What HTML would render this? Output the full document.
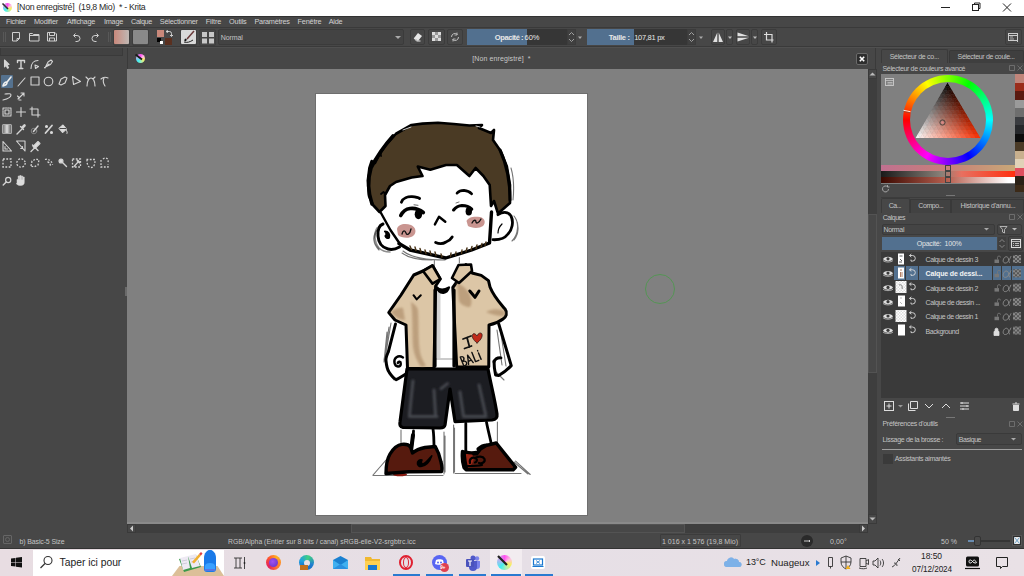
<!DOCTYPE html>
<html><head><meta charset="utf-8">
<style>
*{margin:0;padding:0;box-sizing:border-box}
html,body{width:1024px;height:576px;overflow:hidden;background:#474747;font-family:"Liberation Sans",sans-serif;position:relative}
.a{position:absolute}
.t{position:absolute;white-space:nowrap;color:#c4c4c4;font-size:7px;line-height:9px;letter-spacing:-0.35px}
svg{position:absolute;overflow:visible}
</style></head><body>
<!-- ===== title bar ===== -->
<div class="a" style="left:0;top:0;width:1024px;height:16px;background:#fff"></div>
<div class="a" style="left:3px;top:3px;width:9px;height:9px;border-radius:50%;background:conic-gradient(#ff50f0 0deg,#ffc0e0 60deg,#f8f060 110deg,#b0f0b0 160deg,#40f0f0 220deg,#c0b0f0 300deg,#ff50f0 360deg)"></div>
<svg style="left:0;top:0" width="16" height="16"><path d="M2.5 3.5 L8 9" stroke="#333" stroke-width="1.6"/></svg>
<div class="t" style="left:17px;top:1px;font-size:8.8px;color:#2a2a2a;line-height:12px;letter-spacing:-0.331px">[Non enregistré]&nbsp; (19,8 Mio)&nbsp; * - Krita</div>
<svg style="left:938px;top:0" width="84" height="15">
 <path d="M3 7.5h9" stroke="#222" stroke-width="1"/>
 <rect x="34.5" y="4.5" width="6" height="6" fill="none" stroke="#222"/><path d="M36.5 4.5v-1.5h5.5v5.5h-1.5" fill="none" stroke="#222"/>
 <path d="M65 3.5l8 8M73 3.5l-8 8" stroke="#222" stroke-width="1"/>
</svg>
<!-- ===== menu bar ===== -->
<div class="a" style="left:0;top:16px;width:1024px;height:11px;background:#474747;border-top:1px solid #323232"></div>
<div class="t" style="left:6px;top:17px;font-size:7.3px;line-height:10px;color:#d2d2d2;letter-spacing:-0.272px">Fichier</div>
<div class="t" style="left:34px;top:17px;font-size:7.3px;line-height:10px;color:#d2d2d2;letter-spacing:-0.244px">Modifier</div>
<div class="t" style="left:67px;top:17px;font-size:7.3px;line-height:10px;color:#d2d2d2;letter-spacing:-0.255px">Affichage</div>
<div class="t" style="left:104px;top:17px;font-size:7.3px;line-height:10px;color:#d2d2d2;letter-spacing:-0.256px">Image</div>
<div class="t" style="left:131px;top:17px;font-size:7.3px;line-height:10px;color:#d2d2d2;letter-spacing:-0.354px">Calque</div>
<div class="t" style="left:159.8px;top:17px;font-size:7.3px;line-height:10px;color:#d2d2d2;letter-spacing:-0.215px">Sélectionner</div>
<div class="t" style="left:205.7px;top:17px;font-size:7.3px;line-height:10px;color:#d2d2d2;letter-spacing:-0.103px">Filtre</div>
<div class="t" style="left:229px;top:17px;font-size:7.3px;line-height:10px;color:#d2d2d2;letter-spacing:-0.176px">Outils</div>
<div class="t" style="left:254.5px;top:17px;font-size:7.3px;line-height:10px;color:#d2d2d2;letter-spacing:-0.262px">Paramètres</div>
<div class="t" style="left:297.5px;top:17px;font-size:7.3px;line-height:10px;color:#d2d2d2;letter-spacing:-0.165px">Fenêtre</div>
<div class="t" style="left:328.7px;top:17px;font-size:7.3px;line-height:10px;color:#d2d2d2;letter-spacing:-0.227px">Aide</div>

<!-- ===== toolbar ===== -->
<div class="a" style="left:0;top:27px;width:1024px;height:1px;background:#3a3a3a"></div>
<div class="a" style="left:0;top:28px;width:1024px;height:18px;background:#474747"></div>
<div class="a" style="left:0;top:46px;width:1024px;height:1px;background:#3a3a3a"></div>
<div class="a" style="left:0;top:47px;width:1024px;height:1px;background:#505050"></div>
<svg style="left:0;top:27px" width="1024" height="20">
 <g fill="none" stroke="#cfcfcf" stroke-width="1">
  <!-- grip -->
  <path d="M3.5 5.5v10M5.5 5.5v10" stroke="#6a6a6a" stroke-dasharray="1 1"/>
  <!-- new doc -->
  <path d="M12.5 5.5h7v6l-2.5 2.5h-4.5z"/><path d="M17 14v-2.5h2.5"/>
  <!-- open -->
  <path d="M29.5 6.5h3l1 1h5.5v6.5h-9.5z"/><path d="M29.5 8.5h9.5"/>
  <!-- save -->
  <path d="M47.5 5.5h7.5l1.5 1.5v7h-9z"/><path d="M49.5 5.5v3h5v-3M49.5 14v-3h5v3"/>
  <!-- undo -->
  <path d="M74 8.5h3a3 3 0 0 1 0 6h-1.5" /><path d="M75.5 6.5l-2 2 2 2"/>
  <!-- redo -->
  <path d="M98 8.5h-3a3 3 0 0 0 0 6h1.5" /><path d="M96.5 6.5l2 2-2 2"/>
  <path d="M108.5 5.5v10M110.5 5.5v10" stroke="#6a6a6a" stroke-dasharray="1 1"/>
 </g>
</svg>
<!-- gradient swatch -->
<div class="a" style="left:113px;top:29px;width:17px;height:17px;border:1px solid #3e3e3e;border-radius:2px"></div>
<div class="a" style="left:114px;top:30px;width:15px;height:14px;background:linear-gradient(90deg,#c9887b,#c0b8b4);border-radius:1px"></div>
<div class="a" style="left:132px;top:29px;width:17px;height:17px;border:1px solid #3e3e3e;border-radius:2px"></div>
<div class="a" style="left:133px;top:30px;width:15px;height:14px;background:#898989;border-radius:1px"></div>
<!-- fg/bg -->
<div class="a" style="left:157px;top:30px;width:7px;height:7px;background:#c9887a"></div>
<div class="a" style="left:165px;top:38px;width:7px;height:7px;background:#5a3020"></div>
<div class="a" style="left:157px;top:38px;width:4px;height:4px;background:#000"></div>
<div class="a" style="left:160px;top:41px;width:3px;height:3px;background:#fff"></div>
<svg style="left:165px;top:30px" width="8" height="8"><path d="M1 1.5l1.5-1v2zM1.5 1.5h3a2 2 0 0 1 2 2v2.5M5 5l1.5 1.5 1.5-1.5" fill="none" stroke="#ddd" stroke-width="0.9"/></svg>
<!-- brush preset -->
<div class="a" style="left:180px;top:29px;width:17px;height:17px;border:1px solid #3e3e3e;border-radius:2px"></div>
<div class="a" style="left:181px;top:30px;width:15px;height:14px;background:#d9d9d9;border-radius:1px"></div>
<svg style="left:181px;top:30px" width="15" height="14"><path d="M13 1L6 9" stroke="#6a3a3a" stroke-width="1.5"/><path d="M5 9l-1 2" stroke="#111" stroke-width="2"/><path d="M3 12c3 1 6 0 9-2" stroke="#222" stroke-width="1" fill="none"/></svg>
<!-- grid button -->
<div class="a" style="left:199px;top:29px;width:17px;height:17px;border:1px solid #3e3e3e;border-radius:2px"></div>
<svg style="left:201px;top:31px" width="14" height="13"><g fill="#c8c8c8"><rect x="1" y="1" width="5" height="5"/><rect x="8" y="1" width="5" height="5"/><rect x="1" y="7.5" width="5" height="5"/><rect x="8" y="7.5" width="5" height="5"/></g></svg>
<!-- blend combo -->
<div class="a" style="left:218px;top:29px;width:186px;height:16px;background:#434343;border:1px solid #3b3b3b;border-radius:2px"></div>
<div class="t" style="left:220.7px;top:33px;font-size:7px;letter-spacing:-0.094px">Normal</div>
<svg style="left:394px;top:35px" width="8" height="5"><path d="M1 1h6l-3 3z" fill="#aaa"/></svg>
<!-- eraser / alpha / reload -->
<div class="a" style="left:410px;top:29px;width:15px;height:16px;border:1px solid #3c3c3c;border-radius:2px"></div>
<svg style="left:410px;top:29px" width="15" height="16"><path d="M4 9l4-5 4 3-4 5z" fill="#e6e6e6"/><path d="M4 9l2.5 3h4" stroke="#e6e6e6" fill="none"/></svg>
<div class="a" style="left:428px;top:29px;width:17px;height:16px;border:1px solid #3c3c3c;border-radius:2px"></div>
<svg style="left:430px;top:31px" width="13" height="12"><g fill="#ddd"><rect x="2" y="1" width="3" height="3"/><rect x="8" y="1" width="3" height="3"/><rect x="5" y="4" width="3" height="3"/><rect x="2" y="7" width="3" height="3"/><rect x="8" y="7" width="3" height="3"/></g><g fill="#999"><rect x="5" y="1" width="3" height="3"/><rect x="2" y="4" width="3" height="3"/><rect x="8" y="4" width="3" height="3"/><rect x="5" y="7" width="3" height="3"/></g></svg>
<div class="a" style="left:447px;top:29px;width:16px;height:16px;border:1px solid #3c3c3c;border-radius:2px"></div>
<svg style="left:447px;top:29px" width="16" height="16"><path d="M4.5 8a3.5 3.5 0 0 1 6-2.5M11.5 8a3.5 3.5 0 0 1-6 2.5" fill="none" stroke="#bbb" stroke-width="1"/><path d="M10 3.5v2.5h-2.5M6 12.5v-2.5h2.5" fill="none" stroke="#bbb" stroke-width="0.9"/></svg>
<!-- opacity slider -->
<div class="a" style="left:467px;top:29px;width:101px;height:16px;background:#363636"></div>
<div class="a" style="left:467px;top:29px;width:60px;height:16px;background:#52708f"></div>
<div class="t" style="left:494.8px;top:33px;font-size:7.5px;color:#e8e8e8;font-weight:bold;letter-spacing:-0.409px">Opacité : </div><div class="t" style="left:524.6px;top:33px;font-size:7.5px;color:#e8e8e8;;letter-spacing:-0.072px">60%</div>
<div class="a" style="left:567px;top:29px;width:9px;height:16px;border:1px solid #3c3c3c;background:#404040"></div>
<svg style="left:567px;top:29px" width="9" height="16"><path d="M2 6l2.5-2.5 2.5 2.5M2 10l2.5 2.5 2.5-2.5" fill="none" stroke="#aaa" stroke-width="0.9"/></svg>
<svg style="left:577px;top:36px" width="6" height="4"><path d="M1 0.5h4l-2 2.5z" fill="#aaa"/></svg>
<!-- size slider -->
<div class="a" style="left:587px;top:29px;width:101px;height:16px;background:#363636"></div>
<div class="a" style="left:587px;top:29px;width:47px;height:16px;background:#52708f"></div>
<div class="t" style="left:608.8px;top:33px;font-size:7.5px;color:#e8e8e8;font-weight:bold;letter-spacing:-0.300px">Taille : </div><div class="t" style="left:634.2px;top:33px;font-size:7.5px;color:#e8e8e8;;letter-spacing:-0.295px">107,81 px</div>
<div class="a" style="left:687px;top:29px;width:9px;height:16px;border:1px solid #3c3c3c;background:#404040"></div>
<svg style="left:687px;top:29px" width="9" height="16"><path d="M2 6l2.5-2.5 2.5 2.5M2 10l2.5 2.5 2.5-2.5" fill="none" stroke="#aaa" stroke-width="0.9"/></svg>
<svg style="left:698px;top:36px" width="6" height="4"><path d="M1 0.5h4l-2 2.5z" fill="#aaa"/></svg>
<!-- mirror -->
<div class="a" style="left:711px;top:29px;width:14px;height:16px;border:1px solid #3c3c3c;border-radius:2px"></div>
<svg style="left:711px;top:29px" width="14" height="16"><path d="M6.3 3.5L2 13h4.3zM7.7 3.5L12 13H7.7z" fill="#e0e0e0"/></svg>
<div class="a" style="left:726px;top:29px;width:7px;height:16px;border:1px solid #3c3c3c;border-radius:2px"></div>
<svg style="left:727px;top:36px" width="6" height="4"><path d="M1 0.5h4l-2 2.5z" fill="#bbb"/></svg>
<div class="a" style="left:736px;top:29px;width:14px;height:16px;border:1px solid #3c3c3c;border-radius:2px"></div>
<svg style="left:736px;top:29px" width="14" height="16"><path d="M1.5 3.5L13 7.3H1.5zM1.5 8.7L13 8.7 1.5 12.5z" fill="#e0e0e0"/></svg>
<div class="a" style="left:751px;top:29px;width:7px;height:16px;border:1px solid #3c3c3c;border-radius:2px"></div>
<svg style="left:752px;top:36px" width="6" height="4"><path d="M1 0.5h4l-2 2.5z" fill="#bbb"/></svg>
<div class="a" style="left:761px;top:29px;width:16px;height:16px;border:1px solid #3c3c3c;border-radius:2px"></div>
<svg style="left:761px;top:29px" width="16" height="16"><path d="M5.5 3v8h7M3 5.5h8v8" fill="none" stroke="#ddd" stroke-width="1.2"/></svg>
<!-- far right toolbar icon -->
<div class="a" style="left:1005px;top:29px;width:17px;height:16px;border:1px solid #3c3c3c;border-radius:2px"></div>
<svg style="left:1005px;top:29px" width="17" height="16"><rect x="3.5" y="4.5" width="9" height="7" fill="none" stroke="#ccc"/><path d="M3.5 6.5h9" stroke="#ccc"/><path d="M5 8h3M5 10h4" stroke="#ccc" stroke-width="0.8"/><path d="M11 11l2 2" stroke="#ccc"/></svg>
<!-- ===== left toolbox ===== -->
<div class="a" style="left:0;top:48px;width:123px;height:8px;background:#424242;border:1px solid #3a3a3a;border-top:none"></div>
<div class="a" style="left:1px;top:75px;width:12px;height:13px;background:#55728f;border-radius:1px"></div>
<svg style="left:0;top:56px" width="124" height="135">
<g fill="none" stroke="#d4d4d4" stroke-width="1.1" stroke-linecap="round" stroke-linejoin="round">
 <!-- row1 y center 8 -->
 <path d="M4.5 4l4.5 4.5-2 .3 1.5 3-1 .5-1.5-3-1.5 1.5z" fill="#d4d4d4"/>
 <path d="M17.5 6.5v-2h7v2M21 4.5v8M19.2 12.5h3.6" stroke-width="1.4"/>
 <path d="M31 12.5c0-5 3-8 7-8M35 9l3.5 1.5-3 2z"/>
 <path d="M45 12l3-6 3-2 1.5 1.5-2 3-6 3z M47 10l2-2"/>
 <!-- row2 y center 25 -->
 <path d="M11 21l-3.5 4.5M6.5 26c-1.5 0-3 2-3.5 4 2 -.5 4-2 4-3.5" stroke="#eee" stroke-width="1.6"/>
 <path d="M18 30l7-8"/>
 <rect x="31" y="21" width="8" height="8"/>
 <circle cx="48.5" cy="25.5" r="4.3"/>
 <path d="M59 28l2-5 4-2 2 1-2 5-4 2z"/>
 <path d="M72.5 20.5l8 5-7 3zM72.5 20.5l1 8"/>
 <path d="M87 30c0-5 2-8 4-8s4 3 4 8M86 21l2 2M95 21l-2 2"/>
 <path d="M101 23c2-2 5-2 7-1M104 22c-1 2-1 5 1 8"/>
 <!-- row3 y 38.5 -->
 <path d="M3 44c4-1 8-3 8-5s-4-1-6-1"/>
 <path d="M18 43l6-6M21 37h3v3M17.5 40l2 2M19 44l2 0"/>
 <!-- row4 y 56 -->
 <rect x="3" y="52" width="8" height="8" stroke-dasharray="1.5 0.8"/><rect x="5" y="54" width="4" height="4"/>
 <path d="M21 51.5v9M16.5 56h9"/>
 <path d="M32 51v8h8M30 53h8v8"/>
 <!-- row5 y 73 -->
 <rect x="2.5" y="68.5" width="9" height="9" rx="1" fill="url(#gr)" stroke="#aaa"/>
 <path d="M17 78l5.5-5.5M20.5 70.5l3 3" stroke-width="1.4"/><path d="M22.5 71.5l2-2" stroke-width="2.6"/>
 <circle cx="34" cy="75" r="2.8" stroke="#888" stroke-width="0.9"/><path d="M33.5 75.5l4.5-5.5" stroke-width="1.5"/>
 <path d="M45.5 77l6.5-7.5" stroke-width="1.8"/><circle cx="46.5" cy="70.5" r="1" fill="#ddd"/><circle cx="51.5" cy="76.5" r="1" fill="#ddd"/>
 <path d="M59 72.5l4-3.5 3.5 4-4 3.5z" fill="#ddd"/><path d="M60 72.5h6" stroke="#474747" stroke-width="1"/><path d="M66.5 74.5c.5 1 1 2 .5 3" stroke-width="1"/>
 <!-- row6 y 90 -->
 <path d="M3 85.5v9.5h8.5z"/><path d="M5 90.5v2.5h2.5"/>
 <path d="M16.5 85l8.5 10v-10z" fill="none"/><path d="M22.5 90.5v2h-1.8"/>
 <path d="M31 95.5l3.5-3.5" stroke-width="1.3"/><path d="M33 90.5l5-5 2 2-5 5z" fill="#ddd"/><path d="M32.5 89l5.5 5.5" stroke-width="1.4"/>
 <!-- row7 y 163 -> local 107 -->
 <g stroke-dasharray="1.8 1.5" stroke-width="1.3" stroke-linecap="butt" stroke-linejoin="miter">
 <rect x="3" y="103" width="8" height="8"/>
 <circle cx="21" cy="107" r="4.2"/>
 <path d="M31 110l1-5 4-2 3 1-1 5-4 2z"/>
 <path d="M45 103.5c3-1 7 1 7.5 5.5M47.5 106c2 0 3 2 3 4.5"/>
 <rect x="72.5" y="103" width="8" height="8"/>
 <path d="M87 103.5c0 5 1 8 4 8s4-3 4-8M86.5 103.5h9"/>
 <path d="M101 104v7h7v-3M103 103c2-2 6-1 5 3"/>
 </g>
 <circle cx="61" cy="105" r="2" fill="#ddd"/><path d="M62.5 106.5l4 4" stroke-width="1.4"/>
 <path d="M74 110.5l4.5-5" stroke-width="1.2"/><path d="M77.5 104.5l2 2" stroke-width="2"/>
 <!-- row8 y 180 -> local 124 -->
 <g transform="translate(0,1.5)"><circle cx="8.2" cy="122.5" r="2.6" stroke-width="1.2"/><path d="M6.2 124.5l-3 3" stroke-width="1.4"/>
 <path d="M17 126.5v-4.5h1.2v-3.5h1.3v3.5h.3v-4h1.3v4h.3v-3.5h1.3v3.5h.3v-2.5h1.3v5.5c0 2-1.5 3-3.5 3h-1.2c-1.5 0-2.6-1-3-2z" fill="#ddd" stroke-width="0.5"/></g>
</g>
<defs><linearGradient id="gr"><stop offset="0" stop-color="#666"/><stop offset="0.5" stop-color="#ddd"/><stop offset="1" stop-color="#555"/></linearGradient></defs>
</svg>
<!-- splitter handle -->
<div class="a" style="left:125px;top:287px;width:2px;height:9px;background:#6a6a6a"></div>
<!-- ===== doc tab bar ===== -->
<div class="a" style="left:127px;top:48px;width:749px;height:21px;background:#474747;border-left:1px solid #3a3a3a;border-right:1px solid #3a3a3a"></div>
<div class="a" style="left:136px;top:54px;width:9px;height:9px;border-radius:50%;background:conic-gradient(#ff50f0 0deg,#ffc0e0 60deg,#f8f060 110deg,#b0f0b0 160deg,#40f0f0 220deg,#c0b0f0 300deg,#ff50f0 360deg)"></div>
<svg style="left:132px;top:50px" width="18" height="18"><path d="M3.5 4.5L10 9.5" stroke="#1a1a1a" stroke-width="1.8"/></svg>
<div class="t" style="left:472.2px;top:54px;font-size:7px;color:#c8c8c8;letter-spacing:0.109px">[Non enregistré]&nbsp; *</div>
<div class="a" style="left:856px;top:53px;width:12px;height:12px;background:#2e2e2e;border:1px solid #6a6a6a;border-radius:2px"></div>
<svg style="left:856px;top:53px" width="12" height="12"><path d="M3.8 3.8l4.4 4.4M8.2 3.8l-4.4 4.4" stroke="#fff" stroke-width="1.6"/></svg>
<!-- ===== canvas ===== -->
<div class="a" style="left:127px;top:69px;width:741px;height:455px;background:#808080"></div>
<div class="a" style="left:127px;top:522px;width:741px;height:2px;background:#8a8a8a"></div>
<!-- vscroll -->
<div class="a" style="left:868px;top:69px;width:9px;height:455px;background:#3e3e3e"></div>
<div class="a" style="left:868px;top:69px;width:9px;height:10px;background:#474747;border:1px solid #3a3a3a"></div>
<svg style="left:868px;top:69px" width="9" height="10"><path d="M1.5 6.5l3-3 3 3z" fill="#bbb"/></svg>
<div class="a" style="left:868px;top:514px;width:9px;height:10px;background:#474747;border:1px solid #3a3a3a"></div>
<div class="a" style="left:868px;top:214px;width:9px;height:159px;background:#474747;border:1px solid #535353"></div>
<svg style="left:868px;top:514px" width="9" height="10"><path d="M1.5 3.5l3 3 3-3z" fill="#bbb"/></svg>
<!-- hscroll -->
<div class="a" style="left:127px;top:524px;width:741px;height:9px;background:#3e3e3e"></div>
<div class="a" style="left:127px;top:524px;width:9px;height:9px;background:#474747;border:1px solid #3a3a3a"></div>
<svg style="left:127px;top:524px" width="9" height="9"><path d="M6 1.5l-3 3 3 3z" fill="#ccc"/></svg>
<div class="a" style="left:859px;top:524px;width:9px;height:9px;background:#474747;border:1px solid #3a3a3a"></div>
<div class="a" style="left:351px;top:524px;width:334px;height:9px;background:#474747;border:1px solid #535353"></div>
<svg style="left:859px;top:524px" width="9" height="9"><path d="M3 1.5l3 3-3 3z" fill="#ccc"/></svg>
<!-- splitter right -->
<div class="a" style="left:877px;top:48px;width:4px;height:500px;background:#474747"></div>
<!-- page -->
<div class="a" style="left:316px;top:94px;width:271px;height:421px;background:#fff;box-shadow:0 0 0 1px #6e6e6e"></div>
<!-- ===== right docker ===== -->
<div class="a" style="left:881px;top:48px;width:143px;height:500px;background:#474747"></div>
<!-- color selector tabs -->
<div class="a" style="left:881px;top:49px;width:67px;height:14px;background:#474747;border:1px solid #3a3a3a;border-bottom:none;border-radius:2px 2px 0 0"></div>
<div class="a" style="left:949px;top:50px;width:75px;height:13px;background:#3f3f3f;border:1px solid #383838;border-bottom:none;border-radius:2px 2px 0 0"></div>
<div class="t" style="left:889.7px;top:52px;font-size:7px;letter-spacing:-0.294px">Sélecteur de co...</div>
<div class="t" style="left:957.6px;top:52px;font-size:7px;letter-spacing:-0.320px">Sélecteur de coule...</div>
<div class="t" style="left:882.5px;top:64px;font-size:7px;letter-spacing:-0.341px">Sélecteur de couleurs avancé</div>
<svg style="left:1008px;top:64px" width="16" height="9"><path d="M1.5 1.5h5v5h-5zM9.5 1.5l5 5M14.5 1.5l-5 5" fill="none" stroke="#777" stroke-width="0.8"/></svg>
<div class="a" style="left:881px;top:74px;width:134px;height:110px;background:#808080"></div>
<!-- wheel -->
<div class="a" style="left:903px;top:75px;width:90px;height:90px;border-radius:50%;background:conic-gradient(hsl(90,100%,50%) 0deg,hsl(120,100%,50%) 30deg,hsl(180,100%,50%) 90deg,hsl(240,100%,50%) 150deg,hsl(300,100%,50%) 210deg,hsl(360,100%,50%) 270deg,hsl(60,100%,50%) 330deg,hsl(90,100%,50%) 360deg)"></div>
<div class="a" style="left:910px;top:82px;width:76px;height:76px;border-radius:50%;background:#808080"></div>
<svg style="left:881px;top:74px" width="134" height="110">
 <defs>
  <linearGradient id="tw" x1="34.5" y1="64" x2="82.5" y2="35.45" gradientUnits="userSpaceOnUse"><stop offset="0" stop-color="#fff"/><stop offset="1" stop-color="#fff" stop-opacity="0"/></linearGradient>
  <linearGradient id="tb" x1="66.5" y1="8.5" x2="66.5" y2="64" gradientUnits="userSpaceOnUse"><stop offset="0" stop-color="#000"/><stop offset="1" stop-color="#000" stop-opacity="0"/></linearGradient>
  <linearGradient id="tr" x1="34.5" y1="64" x2="99.5" y2="64" gradientUnits="userSpaceOnUse"><stop offset="0" stop-color="#ffffff"/><stop offset="1" stop-color="#f03010"/></linearGradient>
 </defs>
 <clipPath id="triclip"><path d="M66.5 8.5L99.5 64H34.5z"/></clipPath>
 <g clip-path="url(#triclip)"><path d="M66.50 8.50L64.21 12.46L68.86 12.46Z" fill="#0c0706" stroke="#0c0706" stroke-width="0.35"/><path d="M64.21 12.46L61.93 16.43L66.57 16.43Z" fill="#1e1918" stroke="#1e1918" stroke-width="0.35"/><path d="M64.21 12.46L66.57 16.43L68.86 12.46Z" fill="#180e0c" stroke="#180e0c" stroke-width="0.35"/><path d="M68.86 12.46L66.57 16.43L71.21 16.43Z" fill="#1e0b06" stroke="#1e0b06" stroke-width="0.35"/><path d="M61.93 16.43L59.64 20.39L64.29 20.39Z" fill="#312c2a" stroke="#312c2a" stroke-width="0.35"/><path d="M61.93 16.43L64.29 20.39L66.57 16.43Z" fill="#2a211e" stroke="#2a211e" stroke-width="0.35"/><path d="M66.57 16.43L64.29 20.39L68.93 20.39Z" fill="#311d18" stroke="#311d18" stroke-width="0.35"/><path d="M66.57 16.43L68.93 20.39L71.21 16.43Z" fill="#2a120c" stroke="#2a120c" stroke-width="0.35"/><path d="M71.21 16.43L68.93 20.39L73.57 20.39Z" fill="#310e06" stroke="#310e06" stroke-width="0.35"/><path d="M59.64 20.39L57.36 24.36L62.00 24.36Z" fill="#433e3d" stroke="#433e3d" stroke-width="0.35"/><path d="M59.64 20.39L62.00 24.36L64.29 20.39Z" fill="#3d3331" stroke="#3d3331" stroke-width="0.35"/><path d="M64.29 20.39L62.00 24.36L66.64 24.36Z" fill="#432f2a" stroke="#432f2a" stroke-width="0.35"/><path d="M64.29 20.39L66.64 24.36L68.93 20.39Z" fill="#3d241e" stroke="#3d241e" stroke-width="0.35"/><path d="M68.93 20.39L66.64 24.36L71.29 24.36Z" fill="#432018" stroke="#432018" stroke-width="0.35"/><path d="M68.93 20.39L71.29 24.36L73.57 20.39Z" fill="#3d150c" stroke="#3d150c" stroke-width="0.35"/><path d="M73.57 20.39L71.29 24.36L75.93 24.36Z" fill="#431106" stroke="#431106" stroke-width="0.35"/><path d="M57.36 24.36L55.07 28.32L59.71 28.32Z" fill="#55504f" stroke="#55504f" stroke-width="0.35"/><path d="M57.36 24.36L59.71 28.32L62.00 24.36Z" fill="#4f4543" stroke="#4f4543" stroke-width="0.35"/><path d="M62.00 24.36L59.71 28.32L64.36 28.32Z" fill="#55413d" stroke="#55413d" stroke-width="0.35"/><path d="M62.00 24.36L64.36 28.32L66.64 24.36Z" fill="#4f3631" stroke="#4f3631" stroke-width="0.35"/><path d="M66.64 24.36L64.36 28.32L69.00 28.32Z" fill="#55322a" stroke="#55322a" stroke-width="0.35"/><path d="M66.64 24.36L69.00 28.32L71.29 24.36Z" fill="#4f271e" stroke="#4f271e" stroke-width="0.35"/><path d="M71.29 24.36L69.00 28.32L73.64 28.32Z" fill="#552318" stroke="#552318" stroke-width="0.35"/><path d="M71.29 24.36L73.64 28.32L75.93 24.36Z" fill="#4f180c" stroke="#4f180c" stroke-width="0.35"/><path d="M75.93 24.36L73.64 28.32L78.29 28.32Z" fill="#551506" stroke="#551506" stroke-width="0.35"/><path d="M55.07 28.32L52.79 32.29L57.43 32.29Z" fill="#676261" stroke="#676261" stroke-width="0.35"/><path d="M55.07 28.32L57.43 32.29L59.71 28.32Z" fill="#615755" stroke="#615755" stroke-width="0.35"/><path d="M59.71 28.32L57.43 32.29L62.07 32.29Z" fill="#67534f" stroke="#67534f" stroke-width="0.35"/><path d="M59.71 28.32L62.07 32.29L64.36 28.32Z" fill="#614843" stroke="#614843" stroke-width="0.35"/><path d="M64.36 28.32L62.07 32.29L66.71 32.29Z" fill="#67453d" stroke="#67453d" stroke-width="0.35"/><path d="M64.36 28.32L66.71 32.29L69.00 28.32Z" fill="#613a31" stroke="#613a31" stroke-width="0.35"/><path d="M69.00 28.32L66.71 32.29L71.36 32.29Z" fill="#67362a" stroke="#67362a" stroke-width="0.35"/><path d="M69.00 28.32L71.36 32.29L73.64 28.32Z" fill="#612b1e" stroke="#612b1e" stroke-width="0.35"/><path d="M73.64 28.32L71.36 32.29L76.00 32.29Z" fill="#672718" stroke="#672718" stroke-width="0.35"/><path d="M73.64 28.32L76.00 32.29L78.29 28.32Z" fill="#611c0c" stroke="#611c0c" stroke-width="0.35"/><path d="M78.29 28.32L76.00 32.29L80.64 32.29Z" fill="#671806" stroke="#671806" stroke-width="0.35"/><path d="M52.79 32.29L50.50 36.25L55.14 36.25Z" fill="#797473" stroke="#797473" stroke-width="0.35"/><path d="M52.79 32.29L55.14 36.25L57.43 32.29Z" fill="#736967" stroke="#736967" stroke-width="0.35"/><path d="M57.43 32.29L55.14 36.25L59.79 36.25Z" fill="#796661" stroke="#796661" stroke-width="0.35"/><path d="M57.43 32.29L59.79 36.25L62.07 32.29Z" fill="#735b55" stroke="#735b55" stroke-width="0.35"/><path d="M62.07 32.29L59.79 36.25L64.43 36.25Z" fill="#79574f" stroke="#79574f" stroke-width="0.35"/><path d="M62.07 32.29L64.43 36.25L66.71 32.29Z" fill="#734c43" stroke="#734c43" stroke-width="0.35"/><path d="M66.71 32.29L64.43 36.25L69.07 36.25Z" fill="#79483d" stroke="#79483d" stroke-width="0.35"/><path d="M66.71 32.29L69.07 36.25L71.36 32.29Z" fill="#733d31" stroke="#733d31" stroke-width="0.35"/><path d="M71.36 32.29L69.07 36.25L73.71 36.25Z" fill="#79392a" stroke="#79392a" stroke-width="0.35"/><path d="M71.36 32.29L73.71 36.25L76.00 32.29Z" fill="#732e1e" stroke="#732e1e" stroke-width="0.35"/><path d="M76.00 32.29L73.71 36.25L78.36 36.25Z" fill="#792a18" stroke="#792a18" stroke-width="0.35"/><path d="M76.00 32.29L78.36 36.25L80.64 32.29Z" fill="#731f0c" stroke="#731f0c" stroke-width="0.35"/><path d="M80.64 32.29L78.36 36.25L83.00 36.25Z" fill="#791b06" stroke="#791b06" stroke-width="0.35"/><path d="M50.50 36.25L48.21 40.21L52.86 40.21Z" fill="#8c8786" stroke="#8c8786" stroke-width="0.35"/><path d="M50.50 36.25L52.86 40.21L55.14 36.25Z" fill="#867c79" stroke="#867c79" stroke-width="0.35"/><path d="M55.14 36.25L52.86 40.21L57.50 40.21Z" fill="#8c7873" stroke="#8c7873" stroke-width="0.35"/><path d="M55.14 36.25L57.50 40.21L59.79 36.25Z" fill="#866d67" stroke="#866d67" stroke-width="0.35"/><path d="M59.79 36.25L57.50 40.21L62.14 40.21Z" fill="#8c6961" stroke="#8c6961" stroke-width="0.35"/><path d="M59.79 36.25L62.14 40.21L64.43 36.25Z" fill="#865e55" stroke="#865e55" stroke-width="0.35"/><path d="M64.43 36.25L62.14 40.21L66.79 40.21Z" fill="#8c5a4f" stroke="#8c5a4f" stroke-width="0.35"/><path d="M64.43 36.25L66.79 40.21L69.07 36.25Z" fill="#864f43" stroke="#864f43" stroke-width="0.35"/><path d="M69.07 36.25L66.79 40.21L71.43 40.21Z" fill="#8c4b3d" stroke="#8c4b3d" stroke-width="0.35"/><path d="M69.07 36.25L71.43 40.21L73.71 36.25Z" fill="#864031" stroke="#864031" stroke-width="0.35"/><path d="M73.71 36.25L71.43 40.21L76.07 40.21Z" fill="#8c3c2a" stroke="#8c3c2a" stroke-width="0.35"/><path d="M73.71 36.25L76.07 40.21L78.36 36.25Z" fill="#86311e" stroke="#86311e" stroke-width="0.35"/><path d="M78.36 36.25L76.07 40.21L80.71 40.21Z" fill="#8c2e18" stroke="#8c2e18" stroke-width="0.35"/><path d="M78.36 36.25L80.71 40.21L83.00 36.25Z" fill="#86230c" stroke="#86230c" stroke-width="0.35"/><path d="M83.00 36.25L80.71 40.21L85.36 40.21Z" fill="#8c1f06" stroke="#8c1f06" stroke-width="0.35"/><path d="M48.21 40.21L45.93 44.18L50.57 44.18Z" fill="#9e9998" stroke="#9e9998" stroke-width="0.35"/><path d="M48.21 40.21L50.57 44.18L52.86 40.21Z" fill="#988e8c" stroke="#988e8c" stroke-width="0.35"/><path d="M52.86 40.21L50.57 44.18L55.21 44.18Z" fill="#9e8a86" stroke="#9e8a86" stroke-width="0.35"/><path d="M52.86 40.21L55.21 44.18L57.50 40.21Z" fill="#987f79" stroke="#987f79" stroke-width="0.35"/><path d="M57.50 40.21L55.21 44.18L59.86 44.18Z" fill="#9e7b73" stroke="#9e7b73" stroke-width="0.35"/><path d="M57.50 40.21L59.86 44.18L62.14 40.21Z" fill="#987067" stroke="#987067" stroke-width="0.35"/><path d="M62.14 40.21L59.86 44.18L64.50 44.18Z" fill="#9e6c61" stroke="#9e6c61" stroke-width="0.35"/><path d="M62.14 40.21L64.50 44.18L66.79 40.21Z" fill="#986155" stroke="#986155" stroke-width="0.35"/><path d="M66.79 40.21L64.50 44.18L69.14 44.18Z" fill="#9e5d4f" stroke="#9e5d4f" stroke-width="0.35"/><path d="M66.79 40.21L69.14 44.18L71.43 40.21Z" fill="#985243" stroke="#985243" stroke-width="0.35"/><path d="M71.43 40.21L69.14 44.18L73.79 44.18Z" fill="#9e4f3d" stroke="#9e4f3d" stroke-width="0.35"/><path d="M71.43 40.21L73.79 44.18L76.07 40.21Z" fill="#984431" stroke="#984431" stroke-width="0.35"/><path d="M76.07 40.21L73.79 44.18L78.43 44.18Z" fill="#9e402b" stroke="#9e402b" stroke-width="0.35"/><path d="M76.07 40.21L78.43 44.18L80.71 40.21Z" fill="#98351e" stroke="#98351e" stroke-width="0.35"/><path d="M80.71 40.21L78.43 44.18L83.07 44.18Z" fill="#9e3118" stroke="#9e3118" stroke-width="0.35"/><path d="M80.71 40.21L83.07 44.18L85.36 40.21Z" fill="#98260c" stroke="#98260c" stroke-width="0.35"/><path d="M85.36 40.21L83.07 44.18L87.71 44.18Z" fill="#9e2206" stroke="#9e2206" stroke-width="0.35"/><path d="M45.93 44.18L43.64 48.14L48.29 48.14Z" fill="#b0abaa" stroke="#b0abaa" stroke-width="0.35"/><path d="M45.93 44.18L48.29 48.14L50.57 44.18Z" fill="#aaa09e" stroke="#aaa09e" stroke-width="0.35"/><path d="M50.57 44.18L48.29 48.14L52.93 48.14Z" fill="#b09c98" stroke="#b09c98" stroke-width="0.35"/><path d="M50.57 44.18L52.93 48.14L55.21 44.18Z" fill="#aa918c" stroke="#aa918c" stroke-width="0.35"/><path d="M55.21 44.18L52.93 48.14L57.57 48.14Z" fill="#b08d86" stroke="#b08d86" stroke-width="0.35"/><path d="M55.21 44.18L57.57 48.14L59.86 44.18Z" fill="#aa8279" stroke="#aa8279" stroke-width="0.35"/><path d="M59.86 44.18L57.57 48.14L62.21 48.14Z" fill="#b07f73" stroke="#b07f73" stroke-width="0.35"/><path d="M59.86 44.18L62.21 48.14L64.50 44.18Z" fill="#aa7467" stroke="#aa7467" stroke-width="0.35"/><path d="M64.50 44.18L62.21 48.14L66.86 48.14Z" fill="#b07061" stroke="#b07061" stroke-width="0.35"/><path d="M64.50 44.18L66.86 48.14L69.14 44.18Z" fill="#aa6555" stroke="#aa6555" stroke-width="0.35"/><path d="M69.14 44.18L66.86 48.14L71.50 48.14Z" fill="#b0614f" stroke="#b0614f" stroke-width="0.35"/><path d="M69.14 44.18L71.50 48.14L73.79 44.18Z" fill="#aa5643" stroke="#aa5643" stroke-width="0.35"/><path d="M73.79 44.18L71.50 48.14L76.14 48.14Z" fill="#b0523d" stroke="#b0523d" stroke-width="0.35"/><path d="M73.79 44.18L76.14 48.14L78.43 44.18Z" fill="#aa4731" stroke="#aa4731" stroke-width="0.35"/><path d="M78.43 44.18L76.14 48.14L80.79 48.14Z" fill="#b0432b" stroke="#b0432b" stroke-width="0.35"/><path d="M78.43 44.18L80.79 48.14L83.07 44.18Z" fill="#aa381e" stroke="#aa381e" stroke-width="0.35"/><path d="M83.07 44.18L80.79 48.14L85.43 48.14Z" fill="#b03418" stroke="#b03418" stroke-width="0.35"/><path d="M83.07 44.18L85.43 48.14L87.71 44.18Z" fill="#aa290c" stroke="#aa290c" stroke-width="0.35"/><path d="M87.71 44.18L85.43 48.14L90.07 48.14Z" fill="#b02506" stroke="#b02506" stroke-width="0.35"/><path d="M43.64 48.14L41.36 52.11L46.00 52.11Z" fill="#c2bdbc" stroke="#c2bdbc" stroke-width="0.35"/><path d="M43.64 48.14L46.00 52.11L48.29 48.14Z" fill="#bcb2b0" stroke="#bcb2b0" stroke-width="0.35"/><path d="M48.29 48.14L46.00 52.11L50.64 52.11Z" fill="#c2aeaa" stroke="#c2aeaa" stroke-width="0.35"/><path d="M48.29 48.14L50.64 52.11L52.93 48.14Z" fill="#bca39e" stroke="#bca39e" stroke-width="0.35"/><path d="M52.93 48.14L50.64 52.11L55.29 52.11Z" fill="#c2a098" stroke="#c2a098" stroke-width="0.35"/><path d="M52.93 48.14L55.29 52.11L57.57 48.14Z" fill="#bc958c" stroke="#bc958c" stroke-width="0.35"/><path d="M57.57 48.14L55.29 52.11L59.93 52.11Z" fill="#c29186" stroke="#c29186" stroke-width="0.35"/><path d="M57.57 48.14L59.93 52.11L62.21 48.14Z" fill="#bc8679" stroke="#bc8679" stroke-width="0.35"/><path d="M62.21 48.14L59.93 52.11L64.57 52.11Z" fill="#c28273" stroke="#c28273" stroke-width="0.35"/><path d="M62.21 48.14L64.57 52.11L66.86 48.14Z" fill="#bc7767" stroke="#bc7767" stroke-width="0.35"/><path d="M66.86 48.14L64.57 52.11L69.21 52.11Z" fill="#c27361" stroke="#c27361" stroke-width="0.35"/><path d="M66.86 48.14L69.21 52.11L71.50 48.14Z" fill="#bc6855" stroke="#bc6855" stroke-width="0.35"/><path d="M71.50 48.14L69.21 52.11L73.86 52.11Z" fill="#c2644f" stroke="#c2644f" stroke-width="0.35"/><path d="M71.50 48.14L73.86 52.11L76.14 48.14Z" fill="#bc5943" stroke="#bc5943" stroke-width="0.35"/><path d="M76.14 48.14L73.86 52.11L78.50 52.11Z" fill="#c2553d" stroke="#c2553d" stroke-width="0.35"/><path d="M76.14 48.14L78.50 52.11L80.79 48.14Z" fill="#bc4a31" stroke="#bc4a31" stroke-width="0.35"/><path d="M80.79 48.14L78.50 52.11L83.14 52.11Z" fill="#c2462a" stroke="#c2462a" stroke-width="0.35"/><path d="M80.79 48.14L83.14 52.11L85.43 48.14Z" fill="#bc3b1e" stroke="#bc3b1e" stroke-width="0.35"/><path d="M85.43 48.14L83.14 52.11L87.79 52.11Z" fill="#c23818" stroke="#c23818" stroke-width="0.35"/><path d="M85.43 48.14L87.79 52.11L90.07 48.14Z" fill="#bc2d0c" stroke="#bc2d0c" stroke-width="0.35"/><path d="M90.07 48.14L87.79 52.11L92.43 52.11Z" fill="#c22906" stroke="#c22906" stroke-width="0.35"/><path d="M41.36 52.11L39.07 56.07L43.71 56.07Z" fill="#d5d0ce" stroke="#d5d0ce" stroke-width="0.35"/><path d="M41.36 52.11L43.71 56.07L46.00 52.11Z" fill="#cec5c2" stroke="#cec5c2" stroke-width="0.35"/><path d="M46.00 52.11L43.71 56.07L48.36 56.07Z" fill="#d4c1bc" stroke="#d4c1bc" stroke-width="0.35"/><path d="M46.00 52.11L48.36 56.07L50.64 52.11Z" fill="#ceb6b0" stroke="#ceb6b0" stroke-width="0.35"/><path d="M50.64 52.11L48.36 56.07L53.00 56.07Z" fill="#d5b2aa" stroke="#d5b2aa" stroke-width="0.35"/><path d="M50.64 52.11L53.00 56.07L55.29 52.11Z" fill="#cea79e" stroke="#cea79e" stroke-width="0.35"/><path d="M55.29 52.11L53.00 56.07L57.64 56.07Z" fill="#d4a398" stroke="#d4a398" stroke-width="0.35"/><path d="M55.29 52.11L57.64 56.07L59.93 52.11Z" fill="#ce988c" stroke="#ce988c" stroke-width="0.35"/><path d="M59.93 52.11L57.64 56.07L62.29 56.07Z" fill="#d49486" stroke="#d49486" stroke-width="0.35"/><path d="M59.93 52.11L62.29 56.07L64.57 52.11Z" fill="#ce8979" stroke="#ce8979" stroke-width="0.35"/><path d="M64.57 52.11L62.29 56.07L66.93 56.07Z" fill="#d48573" stroke="#d48573" stroke-width="0.35"/><path d="M64.57 52.11L66.93 56.07L69.21 52.11Z" fill="#ce7a67" stroke="#ce7a67" stroke-width="0.35"/><path d="M69.21 52.11L66.93 56.07L71.57 56.07Z" fill="#d47661" stroke="#d47661" stroke-width="0.35"/><path d="M69.21 52.11L71.57 56.07L73.86 52.11Z" fill="#ce6b55" stroke="#ce6b55" stroke-width="0.35"/><path d="M73.86 52.11L71.57 56.07L76.21 56.07Z" fill="#d4684f" stroke="#d4684f" stroke-width="0.35"/><path d="M73.86 52.11L76.21 56.07L78.50 52.11Z" fill="#ce5d43" stroke="#ce5d43" stroke-width="0.35"/><path d="M78.50 52.11L76.21 56.07L80.86 56.07Z" fill="#d4593d" stroke="#d4593d" stroke-width="0.35"/><path d="M78.50 52.11L80.86 56.07L83.14 52.11Z" fill="#ce4e31" stroke="#ce4e31" stroke-width="0.35"/><path d="M83.14 52.11L80.86 56.07L85.50 56.07Z" fill="#d44a2a" stroke="#d44a2a" stroke-width="0.35"/><path d="M83.14 52.11L85.50 56.07L87.79 52.11Z" fill="#ce3f1e" stroke="#ce3f1e" stroke-width="0.35"/><path d="M87.79 52.11L85.50 56.07L90.14 56.07Z" fill="#d43b18" stroke="#d43b18" stroke-width="0.35"/><path d="M87.79 52.11L90.14 56.07L92.43 52.11Z" fill="#ce300c" stroke="#ce300c" stroke-width="0.35"/><path d="M92.43 52.11L90.14 56.07L94.79 56.07Z" fill="#d52c06" stroke="#d52c06" stroke-width="0.35"/><path d="M39.07 56.07L36.79 60.04L41.43 60.04Z" fill="#e7e2e1" stroke="#e7e2e1" stroke-width="0.35"/><path d="M39.07 56.07L41.43 60.04L43.71 56.07Z" fill="#e1d7d4" stroke="#e1d7d4" stroke-width="0.35"/><path d="M43.71 56.07L41.43 60.04L46.07 60.04Z" fill="#e7d3ce" stroke="#e7d3ce" stroke-width="0.35"/><path d="M43.71 56.07L46.07 60.04L48.36 56.07Z" fill="#e1c8c2" stroke="#e1c8c2" stroke-width="0.35"/><path d="M48.36 56.07L46.07 60.04L50.71 60.04Z" fill="#e7c4bc" stroke="#e7c4bc" stroke-width="0.35"/><path d="M48.36 56.07L50.71 60.04L53.00 56.07Z" fill="#e1b9b0" stroke="#e1b9b0" stroke-width="0.35"/><path d="M53.00 56.07L50.71 60.04L55.36 60.04Z" fill="#e7b5aa" stroke="#e7b5aa" stroke-width="0.35"/><path d="M53.00 56.07L55.36 60.04L57.64 56.07Z" fill="#e1aa9e" stroke="#e1aa9e" stroke-width="0.35"/><path d="M57.64 56.07L55.36 60.04L60.00 60.04Z" fill="#e7a698" stroke="#e7a698" stroke-width="0.35"/><path d="M57.64 56.07L60.00 60.04L62.29 56.07Z" fill="#e19b8c" stroke="#e19b8c" stroke-width="0.35"/><path d="M62.29 56.07L60.00 60.04L64.64 60.04Z" fill="#e79786" stroke="#e79786" stroke-width="0.35"/><path d="M62.29 56.07L64.64 60.04L66.93 56.07Z" fill="#e18c79" stroke="#e18c79" stroke-width="0.35"/><path d="M66.93 56.07L64.64 60.04L69.29 60.04Z" fill="#e78973" stroke="#e78973" stroke-width="0.35"/><path d="M66.93 56.07L69.29 60.04L71.57 56.07Z" fill="#e17e67" stroke="#e17e67" stroke-width="0.35"/><path d="M71.57 56.07L69.29 60.04L73.93 60.04Z" fill="#e77a61" stroke="#e77a61" stroke-width="0.35"/><path d="M71.57 56.07L73.93 60.04L76.21 56.07Z" fill="#e16f55" stroke="#e16f55" stroke-width="0.35"/><path d="M76.21 56.07L73.93 60.04L78.57 60.04Z" fill="#e76b4f" stroke="#e76b4f" stroke-width="0.35"/><path d="M76.21 56.07L78.57 60.04L80.86 56.07Z" fill="#e16043" stroke="#e16043" stroke-width="0.35"/><path d="M80.86 56.07L78.57 60.04L83.21 60.04Z" fill="#e75c3d" stroke="#e75c3d" stroke-width="0.35"/><path d="M80.86 56.07L83.21 60.04L85.50 56.07Z" fill="#e15131" stroke="#e15131" stroke-width="0.35"/><path d="M85.50 56.07L83.21 60.04L87.86 60.04Z" fill="#e74d2b" stroke="#e74d2b" stroke-width="0.35"/><path d="M85.50 56.07L87.86 60.04L90.14 56.07Z" fill="#e1421e" stroke="#e1421e" stroke-width="0.35"/><path d="M90.14 56.07L87.86 60.04L92.50 60.04Z" fill="#e73e18" stroke="#e73e18" stroke-width="0.35"/><path d="M90.14 56.07L92.50 60.04L94.79 56.07Z" fill="#e1330c" stroke="#e1330c" stroke-width="0.35"/><path d="M94.79 56.07L92.50 60.04L97.14 60.04Z" fill="#e72f06" stroke="#e72f06" stroke-width="0.35"/><path d="M36.79 60.04L34.50 64.00L39.14 64.00Z" fill="#f9f4f3" stroke="#f9f4f3" stroke-width="0.35"/><path d="M36.79 60.04L39.14 64.00L41.43 60.04Z" fill="#f3e9e7" stroke="#f3e9e7" stroke-width="0.35"/><path d="M41.43 60.04L39.14 64.00L43.79 64.00Z" fill="#f9e5e1" stroke="#f9e5e1" stroke-width="0.35"/><path d="M41.43 60.04L43.79 64.00L46.07 60.04Z" fill="#f3dad4" stroke="#f3dad4" stroke-width="0.35"/><path d="M46.07 60.04L43.79 64.00L48.43 64.00Z" fill="#f9d6ce" stroke="#f9d6ce" stroke-width="0.35"/><path d="M46.07 60.04L48.43 64.00L50.71 60.04Z" fill="#f3cbc2" stroke="#f3cbc2" stroke-width="0.35"/><path d="M50.71 60.04L48.43 64.00L53.07 64.00Z" fill="#f9c7bc" stroke="#f9c7bc" stroke-width="0.35"/><path d="M50.71 60.04L53.07 64.00L55.36 60.04Z" fill="#f3bcb0" stroke="#f3bcb0" stroke-width="0.35"/><path d="M55.36 60.04L53.07 64.00L57.71 64.00Z" fill="#f9b9aa" stroke="#f9b9aa" stroke-width="0.35"/><path d="M55.36 60.04L57.71 64.00L60.00 60.04Z" fill="#f3ae9e" stroke="#f3ae9e" stroke-width="0.35"/><path d="M60.00 60.04L57.71 64.00L62.36 64.00Z" fill="#f9aa98" stroke="#f9aa98" stroke-width="0.35"/><path d="M60.00 60.04L62.36 64.00L64.64 60.04Z" fill="#f39f8c" stroke="#f39f8c" stroke-width="0.35"/><path d="M64.64 60.04L62.36 64.00L67.00 64.00Z" fill="#f99b86" stroke="#f99b86" stroke-width="0.35"/><path d="M64.64 60.04L67.00 64.00L69.29 60.04Z" fill="#f39079" stroke="#f39079" stroke-width="0.35"/><path d="M69.29 60.04L67.00 64.00L71.64 64.00Z" fill="#f98c73" stroke="#f98c73" stroke-width="0.35"/><path d="M69.29 60.04L71.64 64.00L73.93 60.04Z" fill="#f38167" stroke="#f38167" stroke-width="0.35"/><path d="M73.93 60.04L71.64 64.00L76.29 64.00Z" fill="#f97d61" stroke="#f97d61" stroke-width="0.35"/><path d="M73.93 60.04L76.29 64.00L78.57 60.04Z" fill="#f37255" stroke="#f37255" stroke-width="0.35"/><path d="M78.57 60.04L76.29 64.00L80.93 64.00Z" fill="#f96e4f" stroke="#f96e4f" stroke-width="0.35"/><path d="M78.57 60.04L80.93 64.00L83.21 60.04Z" fill="#f36343" stroke="#f36343" stroke-width="0.35"/><path d="M83.21 60.04L80.93 64.00L85.57 64.00Z" fill="#f95f3d" stroke="#f95f3d" stroke-width="0.35"/><path d="M83.21 60.04L85.57 64.00L87.86 60.04Z" fill="#f35431" stroke="#f35431" stroke-width="0.35"/><path d="M87.86 60.04L85.57 64.00L90.21 64.00Z" fill="#f9512a" stroke="#f9512a" stroke-width="0.35"/><path d="M87.86 60.04L90.21 64.00L92.50 60.04Z" fill="#f3461e" stroke="#f3461e" stroke-width="0.35"/><path d="M92.50 60.04L90.21 64.00L94.86 64.00Z" fill="#f94218" stroke="#f94218" stroke-width="0.35"/><path d="M92.50 60.04L94.86 64.00L97.14 60.04Z" fill="#f3370c" stroke="#f3370c" stroke-width="0.35"/><path d="M97.14 60.04L94.86 64.00L99.50 64.00Z" fill="#f93306" stroke="#f93306" stroke-width="0.35"/></g>
 <circle cx="61.5" cy="48.5" r="2.6" fill="none" stroke="#333" stroke-width="0.8"/><circle cx="61.5" cy="48.5" r="1.2" fill="#d88"/>
 <path d="M22.5 36.3l7 1.4" stroke="#fff" stroke-width="0.9"/><path d="M22.5 37.5l7 1.4" stroke="#555" stroke-width="0.5"/>
 <rect x="4.5" y="4.5" width="8" height="7" fill="none" stroke="#ccc" stroke-width="0.9"/><path d="M4.5 6.5h8M6.5 8.5h5M6.5 10h5" stroke="#ccc" stroke-width="0.7"/>
</svg>
<!-- bars -->
<div class="a" style="left:881px;top:165px;width:134px;height:6px;background:linear-gradient(90deg,#c07090,#c88078 50%,#c8a878)"></div>
<div class="a" style="left:881px;top:171px;width:134px;height:6px;background:linear-gradient(90deg,#1a1a1a,#888078 45%,#e87060 60%,#ff3010)"></div>
<div class="a" style="left:881px;top:177px;width:134px;height:6px;background:linear-gradient(90deg,#3a0800,#b86050 50%,#ffffff 95%)"></div>
<div class="a" style="left:945px;top:165px;width:6px;height:6px;border:1px solid #444"></div><div class="a" style="left:945px;top:171px;width:6px;height:6px;border:1px solid #444"></div><div class="a" style="left:945px;top:177px;width:6px;height:6px;border:1px solid #444"></div>
<!-- swatches -->
<div class="a" style="left:1015px;top:74px;width:9px;height:118px;background:linear-gradient(#c0857a 0 0.5px,#c0857a 0.5px 9.0px,#9a2c1a 9.0px 17.5px,#5a1a10 17.5px 26.0px,#9a9a9a 26.0px 34.5px,#6e6e6e 34.5px 43.0px,#3a3c40 43.0px 51.5px,#26282b 51.5px 60.0px,#0c0c0c 60.0px 68.5px,#4a3a26 68.5px 77.0px,#c8b08e 77.0px 85.5px,#e0d2b8 85.5px 94.0px,#e05060 94.0px 102.5px,#2a2016 102.5px 111.0px,#3c2a18 111.0px 118.0px)"></div>
<svg style="left:881px;top:184px" width="20" height="10"><path d="M7.5 5a3 3 0 1 1-1-2.3M6.5 1v2h2" fill="none" stroke="#bbb" stroke-width="0.8"/></svg>
<div class="a" style="left:946px;top:195px;width:9px;height:1px;background:#777"></div>
<!-- layers tabs -->
<div class="a" style="left:881px;top:197px;width:143px;height:1px;background:#3c3c3c"></div>
<div class="a" style="left:881px;top:198px;width:29px;height:15px;background:#474747;border:1px solid #3a3a3a;border-bottom:none;border-radius:2px 2px 0 0"></div>
<div class="a" style="left:910px;top:199px;width:41px;height:14px;background:#424242;border:1px solid #393939;border-bottom:none"></div>
<div class="a" style="left:951px;top:199px;width:73px;height:14px;background:#424242;border:1px solid #393939;border-bottom:none"></div>
<div class="t" style="left:888.7px;top:201px;font-size:7px;letter-spacing:-0.479px">Ca...</div>
<div class="t" style="left:918.3px;top:201px;font-size:7px;letter-spacing:-0.426px">Compo...</div>
<div class="t" style="left:960.4px;top:201px;font-size:7px;letter-spacing:-0.255px">Historique d'annu...</div>
<div class="t" style="left:882.8px;top:213px;font-size:7px;letter-spacing:-0.498px">Calques</div>
<svg style="left:1008px;top:213px" width="16" height="9"><path d="M1.5 1.5h5v5h-5zM9.5 1.5l5 5M14.5 1.5l-5 5" fill="none" stroke="#777" stroke-width="0.8"/></svg>
<div class="a" style="left:882px;top:224px;width:113px;height:11px;background:#444;border:1px solid #3a3a3a;border-radius:2px"></div>
<div class="t" style="left:883.5px;top:225px;font-size:7px;letter-spacing:-0.310px">Normal</div>
<svg style="left:983px;top:227px" width="8" height="5"><path d="M1 1h5l-2.5 2.5z" fill="#aaa"/></svg>
<div class="a" style="left:997px;top:224px;width:25px;height:11px;border:1px solid #3a3a3a;border-radius:2px"></div>
<svg style="left:997px;top:224px" width="25" height="11"><path d="M3 2.5h7l-2.5 3v3.5l-2-1v-2.5z" fill="none" stroke="#ccc" stroke-width="0.8"/><path d="M15 4h5l-2.5 2.5z" fill="#bbb"/></svg>
<!-- opacity -->
<div class="a" style="left:882px;top:237px;width:115px;height:13px;background:#52708f"></div>
<div class="t" style="left:916.8px;top:239px;font-size:7px;color:#e4e4e4;letter-spacing:-0.220px">Opacité:&nbsp; 100%</div>
<div class="a" style="left:998px;top:237px;width:8px;height:13px;background:#404040"></div>
<svg style="left:998px;top:237px" width="8" height="13"><path d="M1.5 5l2.5-2.5 2.5 2.5M1.5 8l2.5 2.5 2.5-2.5" fill="none" stroke="#999" stroke-width="0.8"/></svg>
<div class="a" style="left:1008px;top:236px;width:15px;height:15px;border:1px solid #3a3a3a;border-radius:2px"></div>
<svg style="left:1008px;top:236px" width="15" height="15"><rect x="3.5" y="3.5" width="9" height="8" fill="none" stroke="#ddd"/><path d="M3.5 5.5h9M5 7.5h1M7 7.5h4M5 9.5h1M7 9.5h4" stroke="#ddd" stroke-width="0.8"/></svg>
<!-- layers list -->
<div class="a" style="left:881px;top:252px;width:143px;height:146px;background:#3a3a3a"></div>
<div class="a" style="left:894px;top:266px;width:130px;height:14px;background:#52708f"></div>
<div class="a" style="left:905px;top:266px;width:1px;height:14px;background:#3a3a3a"></div>
<div class="a" style="left:918px;top:266px;width:1px;height:14px;background:#3a3a3a"></div>
<div class="a" style="left:992px;top:266px;width:1px;height:14px;background:#3a3a3a"></div>
<div class="a" style="left:1001px;top:266px;width:1px;height:14px;background:#3a3a3a"></div>
<div class="a" style="left:1011px;top:266px;width:1px;height:14px;background:#3a3a3a"></div>
<svg style="left:881px;top:252px" width="143" height="90">
 <defs>
  <pattern id="ck" width="4" height="4" patternUnits="userSpaceOnUse"><rect width="4" height="4" fill="#555"/><rect width="2" height="2" fill="#888"/><rect x="2" y="2" width="2" height="2" fill="#888"/></pattern>
  <pattern id="ck2" width="3" height="3" patternUnits="userSpaceOnUse"><rect width="3" height="3" fill="#fff"/><rect width="1.5" height="1.5" fill="#ddd"/><rect x="1.5" y="1.5" width="1.5" height="1.5" fill="#ddd"/></pattern>
  <g id="eye"><path d="M2 7c2-3 8-3 10 0c-2 3-8 3-10 0z" fill="#ddd"/><circle cx="7" cy="6.8" r="1.6" fill="#3a3a3a"/><path d="M2 8.5c2 2 8 2 10 0" stroke="#ddd" fill="none" stroke-width="0.7"/></g>
  <g id="inh"><path d="M28.5 3.5h3a2.8 2.8 0 0 1 0 5.6h-1.5M28.5 3.5l1.8-1.5M28.5 3.5l1.8 1.6M30 9.1v-1.5" fill="none" stroke="#ddd" stroke-width="0.9"/></g>
  <g id="rt"><path d="M113.5 7.5h4.5v3.5h-4.5z" fill="#777"/><path d="M116.5 7.5v-2a1.5 1.5 0 0 1 3 0" fill="none" stroke="#777" stroke-width="0.8"/><path d="M130 4.2C128.5 7.5 127 10.8 124.5 11C122 11.2 121.5 8.5 123 6.2C124.5 4 127 4.3 127.5 7C127.8 9 128 10.5 129 11" fill="none" stroke="#8a8a8a" stroke-width="1"/><rect x="132" y="3" width="8" height="8" fill="url(#ck)"/></g>
 </defs>
 <g><use href="#eye" y="0"/><use href="#inh" y="0"/><use href="#rt" y="0"/></g>
 <g transform="translate(0,14.3)"><use href="#eye"/><use href="#inh"/><use href="#rt"/></g>
 <g transform="translate(0,28.6)"><use href="#eye"/><use href="#inh"/><use href="#rt"/></g>
 <g transform="translate(0,42.9)"><use href="#eye"/><use href="#inh"/><use href="#rt"/></g>
 <g transform="translate(0,57.2)"><use href="#eye"/><use href="#inh"/><use href="#rt"/></g>
 <g transform="translate(0,71.5)"><use href="#eye"/><use href="#inh"/><path d="M113 8h5v4h-5zM114 8v-1.8a1.5 1.5 0 0 1 3 0v1.8" fill="#ddd" stroke="#ddd" stroke-width="0.8"/><path d="M130 4.2C128.5 7.5 127 10.8 124.5 11C122 11.2 121.5 8.5 123 6.2C124.5 4 127 4.3 127.5 7C127.8 9 128 10.5 129 11" fill="none" stroke="#8a8a8a" stroke-width="1"/><rect x="132" y="3" width="8" height="8" fill="url(#ck)"/></g>
 <!-- thumbnails -->
 <rect x="17" y="1.5" width="6" height="11" fill="#fff"/><path d="M18.5 4h3M19 7l2 2M18 10h3" stroke="#333" stroke-width="0.8"/>
 <rect x="17" y="15.5" width="6" height="11" fill="#fff"/><path d="M19 18h2M19.5 20v5M21 20v5" stroke="#a06040" stroke-width="0.8"/>
 <rect x="14.5" y="29" width="11" height="12" fill="url(#ck2)"/><path d="M18 33c2-1 4 1 3 4" stroke="#555" stroke-width="0.7" fill="none"/>
 <rect x="17" y="43.5" width="7" height="11" fill="#fff"/><path d="M19 46h2M19 50l2 2" stroke="#888" stroke-width="0.6"/>
 <rect x="14.5" y="58" width="11" height="12" fill="url(#ck2)"/>
 <rect x="17" y="72.5" width="7" height="11" fill="#fff"/>
</svg>
<div class="t" style="left:925.5px;top:255px;font-size:7px;letter-spacing:-0.408px">Calque de dessin 3</div>
<div class="t" style="left:925.5px;top:269px;font-size:7px;color:#f4f4f4;font-weight:bold;letter-spacing:-0.130px">Calque de dessi...</div>
<div class="t" style="left:925.5px;top:284px;font-size:7px;letter-spacing:-0.408px">Calque de dessin 2</div>
<div class="t" style="left:925.5px;top:298px;font-size:7px;letter-spacing:-0.359px">Calque de dessin ...</div>
<div class="t" style="left:925.5px;top:312px;font-size:7px;letter-spacing:-0.408px">Calque de dessin 1</div>
<div class="t" style="left:925.5px;top:327px;font-size:7px;letter-spacing:-0.406px">Background</div>
<!-- layer buttons -->
<svg style="left:881px;top:398px" width="143" height="18">
 <g fill="none" stroke="#ddd" stroke-width="1">
  <rect x="3.5" y="3.5" width="9" height="9"/><path d="M8 5.5v5M5.5 8h5"/>
  <path d="M17 7h5l-2.5 2.5z" fill="#999" stroke="none"/>
  <path d="M27.5 5.5v7h7M29.5 3.5h7v7h-7z"/>
  <path d="M44 6l4 4 4-4"/>
  <path d="M61 10l4-4 4 4"/>
  <path d="M79 5h9M79 8h9M79 11h9M81 4v2M86 7v2M82 10v2"/>
  <path d="M131.5 6h7M132.5 7v5.5h5v-5.5M134 5h2" fill="#ddd"/>
 </g>
</svg>
<div class="a" style="left:946px;top:417px;width:9px;height:1px;background:#777"></div>
<div class="t" style="left:882.5px;top:419px;font-size:7px;letter-spacing:-0.298px">Préférences d'outils</div>
<svg style="left:1008px;top:420px" width="16" height="9"><path d="M1.5 1.5h5v5h-5zM9.5 1.5l5 5M14.5 1.5l-5 5" fill="none" stroke="#777" stroke-width="0.8"/></svg>
<div class="t" style="left:882.5px;top:435px;font-size:7px;letter-spacing:-0.337px">Lissage de la brosse :</div>
<div class="a" style="left:956px;top:433px;width:66px;height:12px;background:#444;border:1px solid #3a3a3a;border-radius:2px"></div>
<div class="t" style="left:958.7px;top:435px;font-size:7px;letter-spacing:-0.414px">Basique</div>
<svg style="left:1010px;top:437px" width="8" height="5"><path d="M1 1h5l-2.5 2.5z" fill="#aaa"/></svg>
<div class="a" style="left:882px;top:449px;width:140px;height:1px;background:#a0a0a0"></div>
<div class="a" style="left:883px;top:454px;width:10px;height:10px;background:#3a3a3a"></div>
<div class="t" style="left:894.8px;top:454px;font-size:7px;letter-spacing:-0.350px">Assistants aimantés</div>
<!-- ===== status bar ===== -->
<div class="a" style="left:0;top:533px;width:1024px;height:15px;background:#474747"></div>
<div class="a" style="left:3px;top:535px;width:9px;height:9px;border:1px solid #666;border-radius:1px"></div>
<div class="a" style="left:5px;top:537px;width:5px;height:5px;border:1px solid #666;border-radius:50%"></div>
<div class="t" style="left:19.5px;top:537px;font-size:7px;letter-spacing:-0.139px">b) Basic-5 Size</div>
<div class="t" style="left:228px;top:537px;font-size:6.8px;letter-spacing:0.022px">RGB/Alpha (Entier sur 8 bits / canal) sRGB-elle-V2-srgbtrc.icc</div>
<div class="a" style="left:660px;top:534px;width:81px;height:13px;border:1px solid #3c3c3c;border-radius:1px"></div>
<div class="t" style="left:662px;top:537px;font-size:7px;letter-spacing:0.005px">1 016 x 1 576 (19,8 Mio)</div>
<div class="a" style="left:801px;top:535px;width:12px;height:12px;border-radius:50%;background:#2a2a2a"></div>
<svg style="left:801px;top:535px" width="12" height="12"><path d="M3 6h6M8 5l1 1-1 1" stroke="#eee" stroke-width="0.8" fill="none"/></svg>
<div class="t" style="left:830px;top:537px;font-size:7px;letter-spacing:0.113px">0,00°</div>
<div class="t" style="left:941px;top:537px;font-size:7px;letter-spacing:0.008px">50 %</div>
<div class="a" style="left:968px;top:540px;width:42px;height:2px;background:#353535"></div>
<div class="a" style="left:968px;top:540px;width:6px;height:2px;background:#6a8cb0"></div>
<div class="a" style="left:974px;top:536px;width:7px;height:10px;background:#4a4a4a;border:1px solid #333;border-radius:2px"></div>
<div class="a" style="left:1012px;top:535px;width:10px;height:11px;background:#2f2f2f;border:1px solid #555"></div>
<div class="a" style="left:1014px;top:537px;width:6px;height:7px;background:#e8e8e8"></div>
<svg style="left:1014px;top:537px" width="6" height="7"><path d="M0.5 0.5l5 6M5.5 0.5l-5 6" stroke="#5090c0" stroke-width="0.8"/></svg>
<div class="a" style="left:0;top:548px;width:1024px;height:1px;background:#323232"></div>
<!-- ===== taskbar ===== -->
<div class="a" style="left:0;top:549px;width:1024px;height:27px;background:linear-gradient(90deg,#e8dde2,#e6dfe6 50%,#e9e1e6)"></div>
<svg style="left:0;top:549px" width="33" height="27"><g fill="#111"><path d="M11 9.5l4.5-.6v4h-4.5zM16 8.8l6-.8v5h-6zM11 13.5h4.5v4l-4.5-.6zM16 13.5h6v5l-6-.8z"/></g></svg>
<div class="a" style="left:33px;top:550px;width:191px;height:26px;background:#fff"></div>
<svg style="left:33px;top:550px" width="191" height="26"><circle cx="15" cy="10.5" r="4" fill="none" stroke="#333" stroke-width="1.1"/><path d="M12 13.5l-4.5 4.5" stroke="#333" stroke-width="1.2"/></svg>
<div class="t" style="left:59.6px;top:556px;font-size:10.3px;line-height:13px;color:#222;letter-spacing:-0.008px">Taper ici pour</div>
<!-- search illustration -->
<svg style="left:170px;top:546px" width="55" height="30">
 <path d="M2 30L9.5 20H47.5L54 30z" fill="#dcbf98"/>
 <path d="M9 13l17-4 5 12-17 5z" fill="#3a9a4a"/>
 <path d="M10 12l8-2 2 12-7 2zM18 10l8-2 4 12-8 2z" fill="#eeeaf4"/>
 <path d="M12 15l5-1M12 18l5-1M20 13l5-1M21 16l5-1" stroke="#b8b8c8" stroke-width="0.6"/>
 <path d="M22 16l7-8 2 1.5-7 8z" fill="#f0b030"/><path d="M29 8l2-2 1.5 1.5-1.5 2z" fill="#e04040"/>
 <path d="M34 12c0-5 3-8 6-8s6 3 6 8v11c0 2-1 3-3 3h-6c-2 0-3-1-3-3z" fill="#1a7ae8"/>
 <path d="M35 20c0-2 2-3 5-3s5 1 5 3v3h-10z" fill="#3aa0ff"/><path d="M35 24h10" stroke="#b070e0" stroke-width="0.8"/>
 <path d="M38 6c0-2 4-2 4 0" stroke="#1a7ae8" fill="none" stroke-width="1.2"/>
</svg>
<!-- task view -->
<svg style="left:232px;top:556px" width="16" height="14"><path d="M2 2h8M2 12h8M4 2v10M8 2v10M12.5 1v12" fill="none" stroke="#333" stroke-width="0.9"/><circle cx="12.5" cy="7" r="0.9" fill="#222"/></svg>
<!-- firefox -->
<div class="a" style="left:266px;top:555px;width:15px;height:15px;border-radius:50%;background:conic-gradient(from 30deg,#ffb020,#ff7030 120deg,#e02060 200deg,#ff5030 280deg,#ffb020)"></div><div class="a" style="left:269px;top:558px;width:9px;height:9px;border-radius:50%;background:radial-gradient(circle at 40% 40%,#a050f0,#6030c0)"></div>
<!-- edge -->
<div class="a" style="left:299px;top:555px;width:15px;height:15px;border-radius:50%;background:conic-gradient(from 200deg,#1060c0,#20a0e0,#40d080,#2080d0,#1060c0)"></div>
<div class="a" style="left:304px;top:560px;width:6px;height:6px;border-radius:50%;background:#e8e0e6"></div>
<div class="a" style="left:300px;top:565px;width:8px;height:5px;background:#c07020"></div>
<!-- mail -->
<svg style="left:333px;top:556px" width="15" height="14"><path d="M0 4l7.5-4 7.5 4v9H0z" fill="#1a80d0"/><path d="M0 4l7.5 5 7.5-5v9H0z" fill="#40b0f0"/><path d="M0 13l7.5-5 7.5 5z" fill="#2a90e0"/></svg>
<!-- files -->
<svg style="left:365px;top:555px" width="15" height="15"><path d="M0 2h6l1 2h8v11H0z" fill="#f0b830"/><path d="M0 6h15v9H0z" fill="#ffd050"/><path d="M3 10h9v5H3z" fill="#1a78d0"/></svg>
<!-- opera -->
<div class="a" style="left:399px;top:555px;width:14px;height:15px;border-radius:50%;border:2px solid #e02030"></div>
<div class="a" style="left:403px;top:557px;width:6px;height:11px;border-radius:50%;border:1.5px solid #e02030"></div>
<!-- discord -->
<div class="a" style="left:432px;top:555px;width:15px;height:15px;border-radius:50%;background:#5865f2"></div>
<svg style="left:432px;top:555px" width="15" height="15"><path d="M4 5c1-1 6-1 7 0l1 4c-1 1-8 1-9 0z" fill="#fff"/><circle cx="6" cy="7.5" r="1" fill="#5865f2"/><circle cx="9" cy="7.5" r="1" fill="#5865f2"/></svg>
<div class="a" style="left:440px;top:563px;width:9px;height:9px;border-radius:50%;background:#e04050"></div>
<div class="t" style="left:440px;top:564px;font-size:5px;line-height:7px;color:#fff;font-weight:bold">9+</div>
<!-- teams -->
<svg style="left:465px;top:555px" width="16" height="15"><circle cx="12" cy="3.5" r="2.2" fill="#7b83eb"/><path d="M9 6h6v5a3 3 0 0 1-6 0z" fill="#7b83eb"/><circle cx="8" cy="3" r="2.5" fill="#5059c9"/><path d="M4 6h8v6a4 4 0 0 1-8 0z" fill="#5059c9"/><rect x="1" y="4" width="8" height="8" rx="1" fill="#4b53bc"/><path d="M3 6h4M5 6v5" stroke="#fff" stroke-width="1.2"/></svg>
<!-- krita -->
<div class="a" style="left:490px;top:549px;width:32px;height:27px;background:#f2ecf0"></div>
<div class="a" style="left:497px;top:555px;width:15px;height:15px;border-radius:50%;background:conic-gradient(#ff50f0 0deg,#ffc0e0 60deg,#f8f060 110deg,#b0f0b0 160deg,#40f0f0 220deg,#c0b0f0 300deg,#ff50f0 360deg)"></div>
<svg style="left:496px;top:554px" width="18" height="18"><path d="M2 2l9 9" stroke="#222" stroke-width="2.2"/></svg>
<!-- last app -->
<div class="a" style="left:531px;top:556px;width:14px;height:13px;background:#fff;border-radius:2px"></div>
<svg style="left:531px;top:556px" width="14" height="13"><rect x="2.5" y="3" width="9" height="6" fill="none" stroke="#1a78d0" stroke-width="1.2"/><path d="M1.5 10.5h11" stroke="#1a78d0"/><path d="M5 4.5l4 3M9 4.5l-4 3" stroke="#1a78d0" stroke-width="0.8"/></svg>
<!-- underlines -->
<div class="a" style="left:393px;top:574px;width:27px;height:2px;background:#2a7ad0"></div>
<div class="a" style="left:426px;top:574px;width:27px;height:2px;background:#2a7ad0"></div>
<div class="a" style="left:459px;top:574px;width:27px;height:2px;background:#2a7ad0"></div>
<div class="a" style="left:491px;top:574px;width:30px;height:2px;background:#2a7ad0"></div>
<div class="a" style="left:525px;top:574px;width:28px;height:2px;background:#2a7ad0"></div>
<!-- tray -->
<svg style="left:724px;top:556px" width="18" height="12"><path d="M3 11a3 3 0 0 1 0-6 4 4 0 0 1 7-2 3.5 3.5 0 0 1 5 3 2.5 2.5 0 0 1 0 5z" fill="#5a9ae0"/><path d="M3 11a3 3 0 0 1 0-6 4 4 0 0 1 7-2 3.5 3.5 0 0 1 5 3 2.5 2.5 0 0 1 0 5z" fill="#a0c8f0" opacity="0.5"/></svg>
<div class="t" style="left:746px;top:556px;font-size:9px;line-height:13px;color:#222;letter-spacing:-0.127px">13°C</div><div class="t" style="left:771px;top:556px;font-size:9.6px;line-height:13px;color:#222;letter-spacing:0.013px">Nuageux</div>
<svg style="left:815px;top:559px" width="6" height="8"><path d="M1 1l4 3-4 3z" fill="#2a7ad0"/></svg>
<svg style="left:826px;top:555px" width="80" height="16" fill="none" stroke="#333" stroke-width="0.9">
 <path d="M2.5 2.5h4v9h-4z M4.5 11.5v2"/>
 <path d="M15 3l5-2 5 2v4c0 4-3 6-5 7-2-1-5-3-5-7z"/><path d="M20 1v13M15 7h10"/><path d="M22 10l2.5 4h-5z" fill="#f0b020" stroke="none"/>
 <path d="M34 3.5h6v8h-6zM40 6l2.5-1.5v5L40 8"/><path d="M33 13c3 1 6 1 8 0"/>
 <path d="M47 6h2l3-3v10l-3-3h-2z M54 5.5c1 1.5 1 3.5 0 5M56 4c2 2 2 6 0 8"/>
 <path d="M66 12c3-1 5-5 8-9M68 8c2 0 3 1 3 3M72 4l2 2"/>
</svg>
<div class="t" style="left:921px;top:551px;font-size:8.5px;line-height:11px;color:#222;letter-spacing:-0.056px">18:50</div>
<div class="t" style="left:912px;top:564px;font-size:8.2px;line-height:11px;color:#222;letter-spacing:-0.098px">07/12/2024</div>
<svg style="left:964px;top:555px" width="18" height="16"><rect x="2" y="1.5" width="13" height="10" fill="#111" rx="1.5"/><path d="M8.5 6.5C7 4.5 5 4.5 5 6.5S7 8.5 8.5 6.5S10 4.5 12 6.5S10 8.5 8.5 6.5" fill="none" stroke="#fff" stroke-width="1"/><path d="M1 13.5h15" stroke="#111" stroke-width="1.2"/></svg>
<svg style="left:994px;top:555px" width="16" height="16"><path d="M2.5 2.5h11v9h-5l-2 2v-2h-4z" fill="none" stroke="#222" stroke-width="1"/></svg>
<!-- ===== drawing ===== -->
<svg style="left:316px;top:94px" width="271" height="421" viewBox="316 94 271 421">
<defs>
 <filter id="blur1" x="-20%" y="-20%" width="140%" height="140%"><feGaussianBlur stdDeviation="0.8"/></filter>
 <filter id="blur2" x="-20%" y="-20%" width="140%" height="140%"><feGaussianBlur stdDeviation="0.5"/></filter>
</defs>
<g stroke-linecap="round" stroke-linejoin="round">
 <!-- sketch shadows -->
 <g stroke="#3a3a3a" stroke-width="1.1" fill="none" opacity="0.7" filter="url(#blur2)">
  <path d="M391 323l-6 36M389 327l-5 33M387 332l-3 30M386 362l3 12 5 6"/>
  <path d="M497 330l5 35M500 328l6 38M496 372l8 8"/>
  <path d="M401 430v14M444 432v42M453.6 425v48M454.5 428v44M497.4 422v21M445 436v36"/>
  <path d="M373 475l14-16M374 474l12-14M373 475.5h70M455 473.5h66M515.6 461.2l14.6 13.3M514 462l14 12"/>
  <path d="M377 230c-5 6-4 14 2 20M376 233c-3 5-2 11 3 16M514 216c5 6 5 18-2 25M516 219c3 6 3 15-2 21"/>
  <path d="M403 251c10 8 30 9 42 9M402 253c8 6 20 7 30 7M511 168c3 10 3 22 2 32"/>
 </g>
 <!-- hair -->
 <path d="M396 133.75L411.5 125L422.5 123.6L438 122.8L453.75 124L469.4 125.5L482 125L479 128L491 133L494 130L493 140L500.6 151L506.9 166.6L510 185L510 203L498 213.5L494 201L491 206L489.7 185L483.4 176L475.6 168L469.4 176L456.9 165L446 165L430.3 169.7L417.8 166.6L422.5 176L411.6 177.5L396 182L390 186L385 195L385.5 206L379.5 212L373 205L369 196L367.8 180.6L369.4 168L371.7 161L375 163L378.75 155.6L385 146Z" fill="#4a3a24" stroke="#000" stroke-width="2.6"/>
 <path d="M393 136C384 146 376 158 371 168C368 178 368 192 372 204" fill="none" stroke="#000" stroke-width="3.6"/>
 <path d="M500 150C506 163 510 178 510 200" fill="none" stroke="#000" stroke-width="3"/>
 <path d="M403 130l8-3M480 127l-4-1" stroke="#fff" stroke-width="0.8" fill="none"/>
 <path d="M378 156l2.5-4 .5 4M381 194l2.5-2 2 2" stroke="#000" stroke-width="1.8" fill="none"/>
 <!-- ears -->
 <path d="M383 224C379 225.5 377.5 230 378 236C378.5 243 382 247.5 388 249C392 250 396 249 399.5 247" fill="none" stroke="#000" stroke-width="3"/>
 <path d="M377 228C374 233 374 242 379 248C382 251 386 252 390 252" fill="none" stroke="#444" stroke-width="1.6" opacity="0.6"/>
 <path d="M385 231.5c3 0 5 3 4 6c-1.5 1-3 0-3.5-1.5" fill="#000" stroke="#000" stroke-width="2.2"/>
 <path d="M498 214.7C502 212 508 211 511 216C514 222 512 230 508 234C505 238 500 240 493 239.7" fill="none" stroke="#000" stroke-width="2.8"/>
 <path d="M502 224c-3 3-4 6-4 9" fill="none" stroke="#000" stroke-width="1.2"/>
 <!-- face outline -->
 <path d="M381 213L390.4 230L400 244" fill="none" stroke="#000" stroke-width="2.4"/>
 <path d="M399 243.5L410 250L445.8 258L471.7 250L489.5 243L490.5 228L491.5 212" fill="none" stroke="#000" stroke-width="3.4"/>
 <!-- stubble -->
 <g stroke="#4a3418" stroke-width="1.4">
  <path d="M410 246l1.5 3.5M415 247l1 3.5M420 248.5l1 3.5M425 250l1 3.5M430 251l1 3.5M435 252l1 3.5M441 254l1 3M451 253l-.5 3.5M456 252l-.5 3.5M462 250l-.5 3.5M467 248l-1 3.5M472 246.5l-1 3.5M477 245l-1 3.5M482 243.5l-1 3.5M486 242l-1 3.5"/>
 </g>
 <!-- blush -->
 <path d="M397 229C398 224 405 223 411 225C416 227 417 233 413 236C409 239 401 238 398 235Z" fill="#c99590"/>
 <path d="M466.5 221C468 217 474 216 480 217C485 218 486 223 483 226C479 229 471 228 468 226Z" fill="#c99590"/>
 <path d="M402 234c1-4 3-4 4-1s4 1 5-4M472 223c2-4 4-3 4-1s3 1 5-3" fill="none" stroke="#111" stroke-width="1.3"/>
 <!-- brows -->
 <path d="M401.4 202.2C403 198 408 196.5 412 196.7C415 197 418 197.5 419.6 198.5" fill="none" stroke="#000" stroke-width="2.8"/>
 <path d="M414 204.8l4 .5" stroke="#666" stroke-width="1"/>
 <path d="M457 193.2C459 191 462 190.4 464 190.4C467 190.6 470 192 471.7 193.9" fill="none" stroke="#000" stroke-width="2.6"/>
 <!-- eyes -->
 <path d="M400.75 215.5C403 211 406 209 410 208.5C414 208 419 209 423.3 212.5" fill="none" stroke="#000" stroke-width="3.6"/>
 <ellipse cx="418.4" cy="214.3" rx="3.7" ry="5" fill="#000"/>
 <path d="M453.6 209.9C456 207 459 205.7 462 205.5C466 205.5 469 206.5 471.7 209.2" fill="none" stroke="#000" stroke-width="3.2"/>
 <ellipse cx="468.8" cy="211.3" rx="3.2" ry="4.3" fill="#000"/>
 <path d="M456 203l3-1" stroke="#555" stroke-width="0.8"/>
 <!-- nose / mouth -->
 <path d="M434.9 224.4L439 216.8L445.3 221.7" fill="none" stroke="#000" stroke-width="2.4"/>
 <path d="M435.6 242.5C439 244 443 244 446 242C449 241 451 239 452.2 237" fill="none" stroke="#000" stroke-width="2.8"/>
 <!-- neck -->
 <path d="M434.4 260v6M459.4 257.7v5" stroke="#888" stroke-width="1.2" fill="none"/>
 <!-- arms -->
 <path d="M395.5 324L388.4 351.6C387 355 385.5 358 386 361C386.5 366 387 369 389 372C391 375 393 378 396.25 379.7C400 378 404 375 407.2 373.4" fill="none" stroke="#000" stroke-width="3"/>
 <path d="M403 357.5C398 354.5 393.5 358 394.5 363C395.5 367.5 400.5 367.5 400.8 363.8C401 361.5 398.5 361 397.8 363" fill="none" stroke="#000" stroke-width="2.4"/>
 <path d="M498.75 324L511.25 365.6C508 369 503 373 498.75 375.5L495.6 375C494.5 370 494 365 494 361" fill="none" stroke="#000" stroke-width="3"/>
 <path d="M494 362C495 359 497 357.5 501 357.8" fill="none" stroke="#000" stroke-width="2.8"/>
 <!-- undershirt -->
 <rect x="434" y="283" width="22" height="78" fill="#fff"/>
 <rect x="437" y="292" width="3.5" height="66" fill="#d4d4d4"/>
 <path d="M436 359h19" stroke="#bbb" stroke-width="1.5"/>
 <!-- shirt -->
 <path d="M432.5 265.6L423 271L413.75 275L401 295L388.75 312.5L395 320L406 325L407.5 368.4L434 368.4L435.6 286L440.3 279Z" fill="#dcc6a6" stroke="#000" stroke-width="3"/>
 <path d="M466 264.5L472 273L481.25 275.4L488.5 280.6L490 287C494 297 500 303 505 309C508 313 506 317 503 319C499 322 494 324 489 325L488.75 367L456.7 367L452.8 287.5L457.5 281Z" fill="#dcc6a6" stroke="#000" stroke-width="3"/>
 <g fill="#b99b79" opacity="0.9" filter="url(#blur1)">
  <path d="M411 302c3 2 6 4 7 8 1 14 0 30 2 42 1 6 4 10 6 14l-5 1c-4-6-7-12-8-20-1-14 0-30-2-45z"/>
  <path d="M391 312c4-3 8-5 12-4l2 12c-5 0-10-3-14-8z"/>
  <path d="M457 283c5 2 10 6 13 12 2 5 2 9 0 12-4 0-9-2-11-6z"/>
  <path d="M486 312c5 2 10 4 17 4 2-1 2-3 1-5-5-2-11-3-18 1z"/>
 </g>
 <path d="M435 290v76M454 290v76" stroke="#000" stroke-width="3.2"/>
 <path d="M423 271L432.5 265.6L440.3 279L432.5 283.6Z" fill="#dcc6a6" stroke="#000" stroke-width="2.6"/>
 <path d="M452 278L458.5 265L471 264.5L472 271L459 283Z" fill="#dcc6a6" stroke="#000" stroke-width="2.6"/>
 <path d="M436.5 287C439 290 443 291 449 287.4C448 290.5 446.5 292.5 443.5 292.8C440 293 437.5 290.5 436.5 287Z" fill="#000" stroke="#000" stroke-width="2.2"/>
 <path d="M413.5 295.2l3.2 4.2 4.1-4.2" fill="none" stroke="#000" stroke-width="2"/>
 <path d="M469.8 291l5.2 6.3 4-6.3" fill="none" stroke="#000" stroke-width="3"/>
 <!-- I love BALI -->
 <path d="M463 339l8-3M467 337.5l2.5 9.5M464.5 348.5l7-2.5" fill="none" stroke="#111" stroke-width="1.8"/>
 <path d="M477 343c-4-3-6-7-4-9 1-1 3 0 4 2 1-3 4-4 5-2 1 3-2 7-5 9z" fill="#c02a1a" stroke="#111" stroke-width="0.6"/>
 <g fill="none" stroke="#111" stroke-width="1.4" transform="rotate(-22 471 357)">
  <path d="M461 353v10M461 353c4 0 4 4 0 5c5 0 5 5 0 5"/>
  <path d="M466 363l2.5-9 2.5 9M467 360h3"/>
  <path d="M473.5 353v10h3.5"/>
  <path d="M479.5 356v7M479.5 353.5v.5"/>
 </g>
 <!-- shorts -->
 <path d="M407 369L488 369C491 385 495 400 497 414C497.5 418 496 419.5 492 420L455 421.6L450 389L445 425C444.5 427.5 443 428 440 428L403 427.5C400 427 399.5 425 400 422Z" fill="#1c1d22" stroke="#000" stroke-width="3.2"/>
 <g stroke="#45474e" stroke-width="3" fill="none" filter="url(#blur1)">
  <path d="M413 381c-1 10-3 26-3.5 35.5l27.5 0M434 390l1.5 24.5M441 388.6l6.5-5"/>
  <path d="M460 392l3.5 24.5h22.5M479 385l6.5 29"/>
 </g>
 <!-- legs -->
 <path d="M413.5 431c0 6-2 12-2 19M433 429c1 6 1 14 1 20M465.8 423.5c0 8 0 20 0 31M486.5 422.3c1.5 8 3.5 15 4.8 21.7" fill="none" stroke="#000" stroke-width="2.8"/>
 <path d="M413 435l-2 16" stroke="#000" stroke-width="4"/>
 <!-- shoes -->
 <ellipse cx="400" cy="474.5" rx="7" ry="1.8" fill="#8a1a10"/>
 <path d="M386 473.5C386 466 387 459 390 454C393 449 397 445 402 444.4C406 444 409 445 410.5 447L412.5 453C416 450 420 448.5 425 447.5L435.3 446.5C438 451 440 457 441 462C442 466 442.5 469 441.5 471.5L409 471.8Z" fill="#561a0e" stroke="#000" stroke-width="3.4"/>
 <path d="M417.5 464C417 461 419.5 459.5 422 460C421 462 421 464 423 464C426 463 429 459 431.8 455.8C430 461 426 466 421 466.5C419 466.7 418 465.5 417.5 464Z" fill="#000" stroke="#000" stroke-width="1.6"/>
 <path d="M462.5 451.5C462 457 462.5 463 464 467.5L466 469.7L513.2 469.7L515.6 467.2L496.2 443L486.5 445.4L480.4 449L476.7 453.9L468.2 453.9Z" fill="#561a0e" stroke="#000" stroke-width="3.4"/>
 <ellipse cx="469" cy="459" rx="4.5" ry="6.5" fill="#9a2616"/>
 <path d="M464 452c1 6 1 11 2.5 15" stroke="#000" stroke-width="3" fill="none"/>
 <path d="M470 463C469 459 472 457 475 458C478 459 477 462 475 462.5M475 458C478 456 483 456 484.5 459C485.5 462 482 464 479 463M468 466c5 0 10 0 14-1" stroke="#000" stroke-width="2.2" fill="none"/>
 <path d="M466 452c3 1 8 1 12 0M478 449c3-3 6-4 9-4" stroke="#000" stroke-width="3.2" fill="none"/>
</g>
</svg>
<!-- brush cursor -->
<div class="a" style="left:645px;top:274px;width:30px;height:30px;border-radius:50%;border:1px solid #4a9a4a;opacity:0.8"></div>
</body></html>
